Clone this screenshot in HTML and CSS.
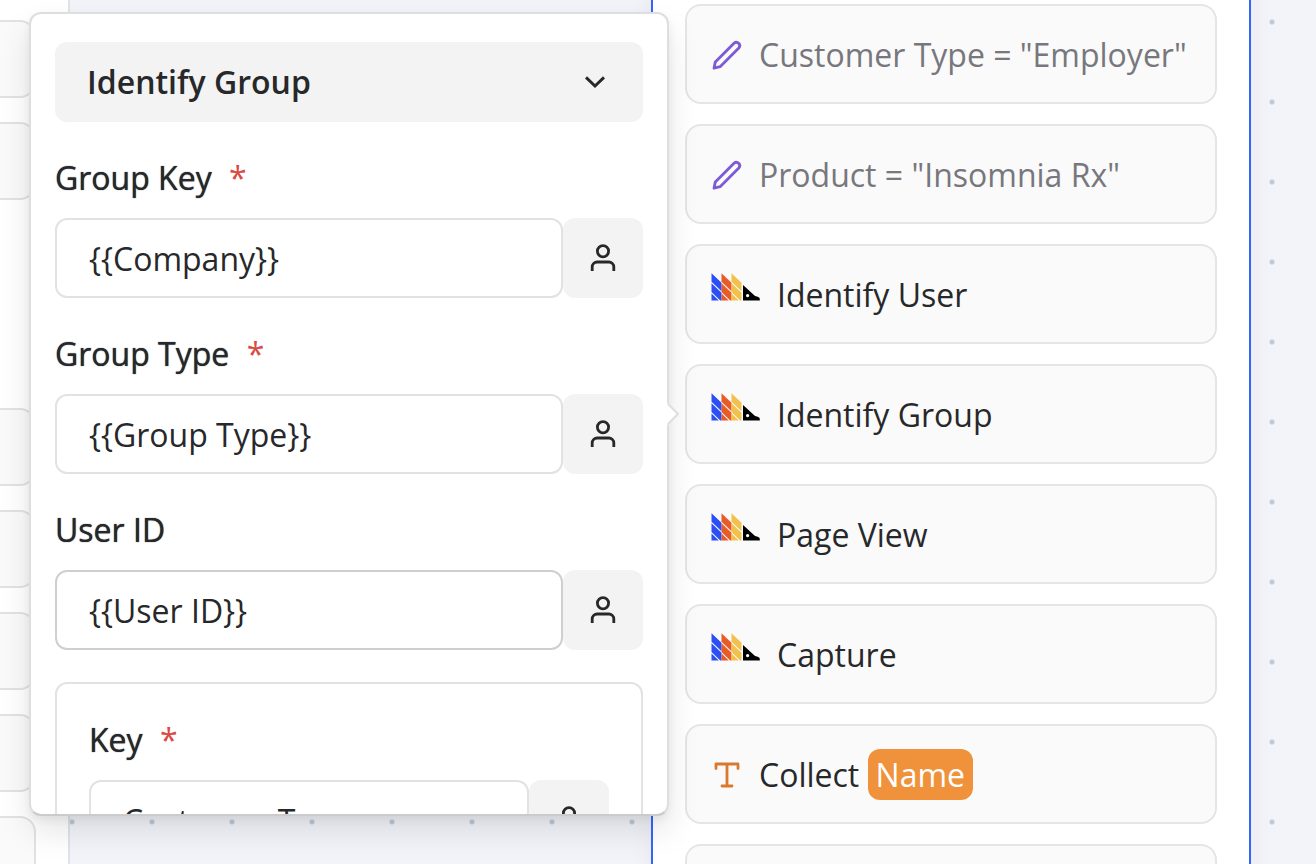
FILE: index.html
```html
<!DOCTYPE html>
<html lang="en">
<head>
<meta charset="utf-8">
<title>Flow editor</title>
<link rel="stylesheet" href="styles.css">
</head>
<body>
<svg class="defs" aria-hidden="true">
  <symbol id="pencil" viewBox="0 0 32 32">
    <path d="M3 29.2 L4.3 22.9 L23 4.2 A3.4 3.4 0 0 1 27.8 9 L9.1 27.7 Z" fill="none" stroke="currentColor" stroke-width="2.8" stroke-linejoin="round"/>
  </symbol>
  <symbol id="user" viewBox="0 0 28 28">
    <circle cx="14" cy="7.2" r="5.6" fill="none" stroke="currentColor" stroke-width="2.8"/>
    <path d="M3.2 27 V23 A5 5 0 0 1 8.2 18 H19.8 A5 5 0 0 1 24.8 23 V27" fill="none" stroke="currentColor" stroke-width="2.8"/>
  </symbol>
  <symbol id="hedgehog" viewBox="0 0 50 28">
    <path fill="#2b4ef5" d="M0.5 0.2 L10.5 9.7 V18.3 L0.5 8.8 Z M0.5 10.2 L10.5 19.7 V27.5 H9.3 L0.5 18.9 Z M0.5 20.4 L7.8 27.5 H0.5 Z"/>
    <path fill="#e85b27" d="M10.5 0.2 L20.5 9.7 V18.3 L10.5 8.8 Z M10.5 10.2 L20.5 19.7 V27.5 H19.3 L10.5 18.9 Z M10.5 20.4 L17.8 27.5 H10.5 Z"/>
    <path fill="#f2c04c" d="M20.5 0.2 L30.5 9.7 V18.3 L20.5 8.8 Z M20.5 10.2 L30.5 19.7 V27.5 H29.3 L20.5 18.9 Z M20.5 20.4 L27.8 27.5 H20.5 Z"/>
    <path fill="#000" d="M32 12 L43.5 22.5 C45 24 48.8 23.4 48.8 26 V27.5 H32 Z"/>
    <circle cx="36.6" cy="22.6" r="1.6" fill="#fff"/>
  </symbol>
  <symbol id="text" viewBox="0 0 32 32">
    <path d="M5 9.5 V5 H27 V9.5 M16 5 V27 M11 27 H21" fill="none" stroke="currentColor" stroke-width="2.8" stroke-linecap="round" stroke-linejoin="round"/>
  </symbol>
</svg>
<main class="canvas">
  <section class="node node-left" aria-label="Previous step">
    <div class="slot-group"><div class="slot"></div><div class="slot"></div></div>
    <div class="slot-group"><div class="slot"></div><div class="slot"></div><div class="slot"></div><div class="slot"></div><div class="slot"></div></div>
  </section>

  <section class="node node-selected" aria-label="Selected step">
    <div class="card card-muted"><svg class="icon icon-pencil"><use href="#pencil"/></svg><span>Customer Type = "Employer"</span></div>
    <div class="card card-muted"><svg class="icon icon-pencil"><use href="#pencil"/></svg><span>Product = "Insomnia Rx"</span></div>
    <div class="card"><svg class="logo"><use href="#hedgehog"/></svg><span>Identify User</span></div>
    <div class="card"><svg class="logo"><use href="#hedgehog"/></svg><span>Identify Group</span></div>
    <div class="card"><svg class="logo"><use href="#hedgehog"/></svg><span>Page View</span></div>
    <div class="card"><svg class="logo"><use href="#hedgehog"/></svg><span>Capture</span></div>
    <div class="card"><svg class="icon icon-text"><use href="#text"/></svg><span>Collect <span class="tag">Name</span></span></div>
    <div class="card"></div>
  </section>

  <aside class="popover">
    <form class="popover-body">
      <button type="button" class="action">Identify Group
        <svg class="chevron" viewBox="0 0 20 12"><path d="M1 1.4 L10 10 L19 1.4" fill="none" stroke="currentColor" stroke-width="2.9"/></svg>
      </button>
      <div class="field">
        <label for="group-key">Group Key <span class="required">*</span></label>
        <div class="control"><input id="group-key" type="text" value="{{Company}}"><button type="button" aria-label="Choose attribute"><svg class="user"><use href="#user"/></svg></button></div>
      </div>
      <div class="field">
        <label for="group-type">Group Type <span class="required">*</span></label>
        <div class="control"><input id="group-type" type="text" value="{{Group Type}}"><button type="button" aria-label="Choose attribute"><svg class="user"><use href="#user"/></svg></button></div>
      </div>
      <div class="field">
        <label for="user-id">User ID</label>
        <div class="control"><input id="user-id" class="hovered" type="text" value="{{User ID}}"><button type="button" aria-label="Choose attribute"><svg class="user"><use href="#user"/></svg></button></div>
      </div>
      <div class="property">
        <div class="field">
          <label for="prop-key">Key <span class="required">*</span></label>
          <div class="control"><input id="prop-key" type="text" value="Customer Type"><button type="button" aria-label="Choose attribute"><svg class="user"><use href="#user"/></svg></button></div>
        </div>
      </div>
    </form>
    <svg class="arrow" viewBox="0 0 12 22"><path d="M0 0 L11 11 L0 22 Z" fill="#fff"/><path d="M1 1 L11 11 L1 21" fill="none" stroke="#dededf" stroke-width="2"/></svg>
  </aside>
</main>
</body>
</html>
```
FILE: styles.css
```css
* { box-sizing: border-box; }

body {
  margin: 0;
  font-family: "Open Sans", "Noto Sans", sans-serif;
  font-size: 32px;
  line-height: 44px;
  color: #27282a;
}

.defs { position: absolute; width: 0; height: 0; }

.canvas {
  position: relative;
  height: 100vh;
  overflow: hidden;
  background-color: #f3f4f9;
  background-image: radial-gradient(circle, #bccadb 0, #bccadb 2px, transparent 3px);
  background-size: 80px 80px;
  background-position: 32px 62px;
}

.node {
  position: absolute;
  display: flex;
  flex-direction: column;
  background: #fff;
}

.node-left {
  left: -530px;
  top: -62px;
  width: 600px;
  padding: 80px 32px;
  gap: 208px;
  border: 2px solid #e2e3e7;
}

.slot-group { display: flex; flex-direction: column; gap: 24px; }

.slot {
  height: 78px;
  background: #fafafa;
  border: 2px solid #e2e2e3;
  border-radius: 16px;
}

.node-selected {
  left: 651px;
  top: -36px;
  width: 600px;
  padding: 38px 32px;
  gap: 20px;
  border: 2px solid #3366ff;
  box-shadow: 0 8px 24px rgba(0, 0, 0, 0.05);
}

.card {
  display: flex;
  align-items: center;
  gap: 16px;
  height: 100px;
  padding: 2px 24px 0;
  background: #fafafa;
  border: 2px solid #e5e5e6;
  border-radius: 16px;
  white-space: nowrap;
}

.card-muted { color: #77777d; }

.icon { width: 32px; height: 32px; }
.icon-pencil { color: #7e5bd6; }
.icon-text { color: #d9792e; }

.logo { width: 50px; height: 28px; margin-bottom: 16px; }

.tag {
  padding: 4px 8px;
  color: #fff;
  background: #f0923b;
  border-radius: 12px;
}

.popover {
  position: absolute;
  left: 29px;
  top: 12px;
  width: 640px;
  height: 804px;
  background: #fff;
  border: 2px solid #dededf;
  border-bottom-color: #cbcbcc;
  border-radius: 12px;
  box-shadow: 0 16px 32px rgba(0, 0, 0, 0.1), 0 4px 8px rgba(0, 0, 0, 0.06);
}

.popover-body {
  display: flex;
  flex-direction: column;
  gap: 34px;
  height: 100%;
  padding: 28px 24px 0;
  overflow: hidden;
  border-radius: 10px;
}

.popover-body > * { flex-shrink: 0; }

.arrow {
  position: absolute;
  left: 636px;
  top: 389px;
  width: 12px;
  height: 22px;
}

button, input { font: inherit; color: inherit; }

.action {
  display: flex;
  align-items: center;
  justify-content: space-between;
  height: 80px;
  padding: 0 38px 0 32px;
  font-weight: 600;
  background: #f3f3f3;
  border: 0;
  border-radius: 12px;
}

.chevron { width: 20px; height: 12px; }

.field { display: flex; flex-direction: column; gap: 18px; }

.field label {
  font-weight: 500;
  text-shadow: 0 0 1px currentColor;
}

.required {
  margin-left: 9px;
  color: #d94a43;
  text-shadow: none;
}

.control { display: flex; }

.control input {
  flex: 1;
  min-width: 0;
  height: 80px;
  padding: 0 32px;
  background: #fff;
  border: 2px solid #e2e2e3;
  border-radius: 12px;
}

.control input.hovered { border-color: #cfcfd1; }

.control button {
  display: grid;
  place-items: center;
  width: 80px;
  padding: 0;
  background: #f3f3f3;
  border: 0;
  border-radius: 12px;
}

.user { width: 28px; height: 28px; }

.property {
  margin-top: -2px;
  padding: 34px 32px 32px;
  border: 2px solid #e2e2e3;
  border-radius: 12px;
}
```
